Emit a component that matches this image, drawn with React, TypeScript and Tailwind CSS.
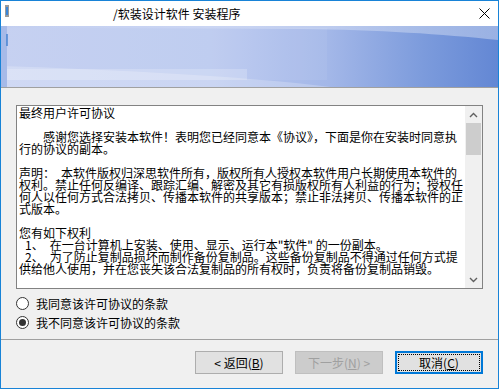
import React from "react";

const font = { fontFamily: '"Noto Sans CJK SC", "Noto Sans", sans-serif' };

function Line({ children }: { children?: React.ReactNode }) {
  return <div className="h-[12px] leading-[12px] whitespace-pre">{children ?? "\u00a0"}</div>;
}

function Banner() {
  return (
    <div className="h-[61px] w-full relative overflow-hidden">
      <svg width="497" height="61" viewBox="0 0 497 61" className="block">
        <defs>
          <linearGradient id="bg" x1="0" y1="0" x2="1" y2="0">
            <stop offset="0" stopColor="#c3cff1" />
            <stop offset="0.42" stopColor="#bccaf0" />
            <stop offset="0.66" stopColor="#a3b7e8" />
            <stop offset="0.85" stopColor="#7c9bdc" />
            <stop offset="1" stopColor="#6387d4" />
          </linearGradient>
          <linearGradient id="top" x1="0" y1="0" x2="1" y2="0">
            <stop offset="0" stopColor="#ffffff" stopOpacity="0" />
            <stop offset="0.5" stopColor="#ffffff" stopOpacity="0.25" />
            <stop offset="1" stopColor="#ffffff" stopOpacity="0.35" />
          </linearGradient>
        </defs>
        <rect x="0" y="0" width="497" height="61" fill="url(#bg)" />
        <path d="M0 0 H497 V14 C440 8 380 4 300 3 C200 2 100 2 0 2 Z" fill="url(#top)" />
        <path d="M0 40 C120 44 240 50 330 61 H0 Z" fill="#ffffff" opacity="0.22" />
        <rect x="0" y="0" width="6" height="61" fill="#a6bae8" />
        <rect x="6" y="2" width="320" height="52" fill="#ffffff" opacity="0.06" />
        <rect x="6" y="43" width="240" height="11" fill="#ffffff" opacity="0.2" />
        <rect x="5" y="8" width="2" height="12" fill="#3f7fd0" opacity="0.7" />
      </svg>
    </div>
  );
}

function Btn({ children, variant }: { children: React.ReactNode; variant: "normal" | "disabled" | "focus" }) {
  if (variant === "focus") {
    return (
      <div className="w-[88px] h-[23px] border-2 border-[#0078d7] bg-[#e1e1e1] p-px">
        <div className="w-full h-full border border-dotted border-black flex items-center justify-center text-[12px] leading-none text-black">
          {children}
        </div>
      </div>
    );
  }
  if (variant === "disabled") {
    return (
      <div className="w-[88px] h-[23px] border border-[#bfbfbf] bg-[#cccccc] flex items-center justify-center text-[12px] leading-none text-[#a0a0a0]">
        {children}
      </div>
    );
  }
  return (
    <div className="w-[88px] h-[23px] border border-[#adadad] bg-[#e1e1e1] flex items-center justify-center text-[12px] leading-none text-black">
      {children}
    </div>
  );
}

export default function App() {
  return (
    <div style={font} className="w-[499px] h-[389px] border border-[#1883d7] bg-[#f0f0f0] flex flex-col text-black">
      {/* title bar */}
      <div className="h-[25px] bg-white relative flex items-center shrink-0">
        <div className="absolute left-[4px] top-[4px] w-[4px] h-[12px] bg-[#9a9a9a]">
          <div className="ml-[1px] mt-[2px] w-[2px] h-[8px] bg-[#3a86d8]" />
        </div>
        <div className="pl-[112px] text-[12px] leading-none whitespace-pre">/软装设计软件 安装程序</div>
        <svg className="absolute right-[8px] top-[7px]" width="11" height="11" viewBox="0 0 11 11">
          <path d="M0.5 0.5 L10.5 10.5 M10.5 0.5 L0.5 10.5" stroke="#000" strokeWidth="1" />
        </svg>
      </div>
      <Banner />
      <div className="h-px bg-[#a0a0a0] shrink-0" />
      {/* body */}
      <div className="flex-1 flex flex-col">
        <div className="ml-[15px] mt-[17px] w-[467px] h-[184px] border border-[#828282] bg-white flex">
          <div className="flex-1 pl-[2px] pt-[1px] text-[12px] overflow-hidden">
            <Line>最终用户许可协议</Line>
            <Line />
            <Line><span className="pl-[24px]">感谢您选择安装本软件！表明您已经同意本《协议》，下面是你在安装时同意执</span></Line>
            <Line>行的协议的副本。</Line>
            <Line />
            <Line>声明：<span className="pl-[6px]">本软件版权归深思软件所有，版权所有人授权本软件用户长期使用本软件的</span></Line>
            <Line>权利。禁止任何反编译、跟踪汇编、解密及其它有损版权所有人利益的行为；授权任</Line>
            <Line>何人以任何方式合法拷贝、传播本软件的共享版本；禁止非法拷贝、传播本软件的正</Line>
            <Line>式版本。</Line>
            <Line />
            <Line>您有如下权利</Line>
            <Line><span className="pl-[6px]">1、</span><span className="pl-[6px]">在一台计算机上安装、使用、显示、运行本"软件" 的一份副本。</span></Line>
            <Line><span className="pl-[6px]">2、</span><span className="pl-[6px]">为了防止复制品损坏而制作备份复制品。这些备份复制品不得通过任何方式提</span></Line>
            <Line>供给他人使用，并在您丧失该合法复制品的所有权时，负责将备份复制品销毁。</Line>
          </div>
          <div className="w-[17px] bg-[#f0f0f0] flex flex-col items-center shrink-0">
            <div className="h-[17px] w-full flex items-center justify-center">
              <svg width="9" height="6" viewBox="0 0 9 6"><path d="M1 5 L4.5 1.5 L8 5" fill="none" stroke="#606060" strokeWidth="1.4" /></svg>
            </div>
            <div className="w-[15px] h-[32px] bg-[#cdcdcd]" />
            <div className="flex-1" />
            <div className="h-[17px] w-full flex items-center justify-center">
              <svg width="9" height="6" viewBox="0 0 9 6"><path d="M1 1 L4.5 4.5 L8 1" fill="none" stroke="#606060" strokeWidth="1.4" /></svg>
            </div>
          </div>
        </div>
        <div className="ml-[15px] mt-[5px] flex flex-col">
          <div className="h-[19px] flex items-center gap-[7px] text-[12px]">
            <div className="w-[13px] h-[13px] rounded-full border border-[#333] bg-white" />
            <span>我同意该许可协议的条款</span>
          </div>
          <div className="h-[19px] flex items-center gap-[7px] text-[12px]">
            <div className="w-[13px] h-[13px] rounded-full border border-[#333] bg-white flex items-center justify-center">
              <div className="w-[7px] h-[7px] rounded-full bg-[#333]" />
            </div>
            <span>我不同意该许可协议的条款</span>
          </div>
        </div>
        <div className="flex-1" />
        <div className="h-px bg-[#a0a0a0]" />
        <div className="mt-[11px] mb-[14px] mr-[15px] flex justify-end gap-[12px]">
          <Btn variant="normal">&lt; 返回(<span className="underline">B</span>)</Btn>
          <Btn variant="disabled">下一步(<span className="underline">N</span>) &gt;</Btn>
          <Btn variant="focus">取消(<span className="underline">C</span>)</Btn>
        </div>
      </div>
    </div>
  );
}
